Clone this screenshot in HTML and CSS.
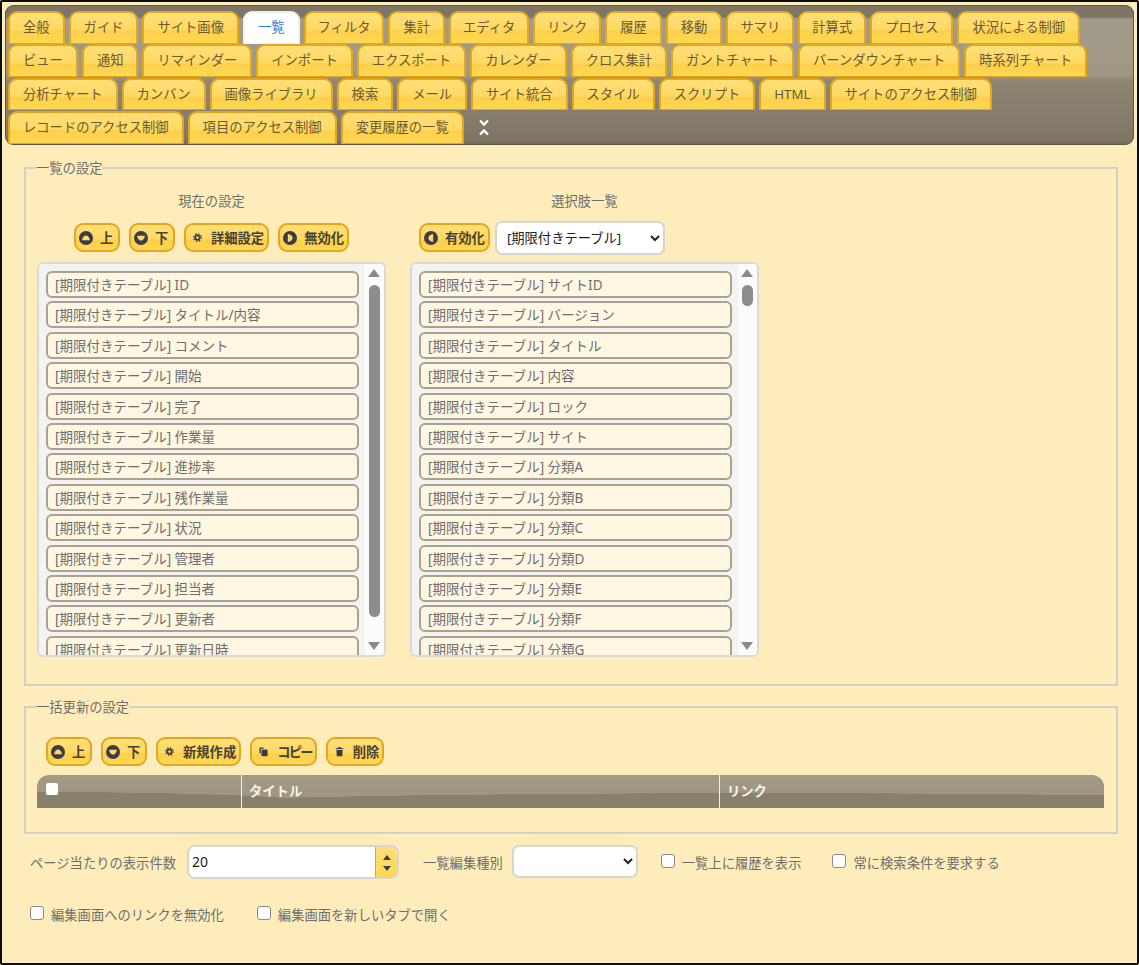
FILE: index.html
```html
<!DOCTYPE html>
<html lang="ja">
<head>
<meta charset="utf-8">
<title>一覧の設定</title>
<link rel="stylesheet" href="styles.css">
</head>
<body>
<svg class="sprite" aria-hidden="true">
  <symbol id="i-up" viewBox="0 0 16 16"><circle cx="8" cy="8" r="8" fill="#3c3c46"/><path d="M3.500 10.500C4 7 6 5 8 5s4 2 4.500 5.500z" fill="#ffd964"/></symbol>
  <symbol id="i-down" viewBox="0 0 16 16"><circle cx="8" cy="8" r="8" fill="#3c3c46"/><path d="M3.500 5.500C4 9 6 11 8 11s4-2 4.500-5.500z" fill="#ffd964"/></symbol>
  <symbol id="i-right" viewBox="0 0 16 16"><circle cx="8" cy="8" r="8" fill="#3c3c46"/><path d="M5.500 3.500C9 4 11 6 11 8s-2 4-5.500 4.500z" fill="#ffd964"/></symbol>
  <symbol id="i-left" viewBox="0 0 16 16"><circle cx="8" cy="8" r="8" fill="#3c3c46"/><path d="M10.500 3.500C7 4 5 6 5 8s2 4 5.500 4.500z" fill="#ffd964"/></symbol>
  <symbol id="i-gear" viewBox="0 0 16 16"><circle cx="8" cy="8" r="3.200" fill="none" stroke="#3c3c46" stroke-width="2.400"/><circle cx="8" cy="8" r="5.300" fill="none" stroke="#3c3c46" stroke-width="2.200" stroke-dasharray="2.100 2.060"/></symbol>
  <symbol id="i-copy" viewBox="0 0 16 16"><path d="M2 3.500A1.500 1.500 0 0 1 3.500 2H8v2H5.500A1.500 1.500 0 0 0 4 5.500V11H3.500A1.500 1.500 0 0 1 2 9.500z" fill="#3c3c46"/><rect x="5" y="5" width="9" height="10" rx="2" fill="#3c3c46"/></symbol>
  <symbol id="i-trash" viewBox="0 0 16 16"><path d="M2.500 3h11v1.600h-11z" fill="#3c3c46"/><path d="M6 1.500h4V3H6z" fill="#3c3c46"/><path d="M3.500 5.800h9L12 15H4z" fill="#3c3c46"/></symbol>
</svg>
<div class="frame">
  <nav class="tabs">
    <div class="tab-row">
      <a class="tab">全般</a><a class="tab">ガイド</a><a class="tab">サイト画像</a><a class="tab tab-on">一覧</a><a class="tab tab-tight">フィルタ</a><a class="tab">集計</a><a class="tab tab-tight">エディタ</a><a class="tab tab-tight">リンク</a><a class="tab">履歴</a><a class="tab">移動</a><a class="tab tab-tight">サマリ</a><a class="tab tab-tight">計算式</a><a class="tab">プロセス</a><a class="tab">状況による制御</a>
    </div>
    <div class="tab-row">
      <a class="tab">ビュー</a><a class="tab">通知</a><a class="tab">リマインダー</a><a class="tab">インポート</a><a class="tab">エクスポート</a><a class="tab">カレンダー</a><a class="tab">クロス集計</a><a class="tab">ガントチャート</a><a class="tab">バーンダウンチャート</a><a class="tab">時系列チャート</a>
    </div>
    <div class="tab-row">
      <a class="tab">分析チャート</a><a class="tab">カンバン</a><a class="tab">画像ライブラリ</a><a class="tab">検索</a><a class="tab">メール</a><a class="tab">サイト統合</a><a class="tab">スタイル</a><a class="tab">スクリプト</a><a class="tab">HTML</a><a class="tab">サイトのアクセス制御</a>
    </div>
    <div class="tab-row">
      <a class="tab">レコードのアクセス制御</a><a class="tab">項目のアクセス制御</a><a class="tab">変更履歴の一覧</a>
      <svg class="expand" viewBox="0 0 12 17" width="12" height="17"><path d="M2 1.500 6 5.500l4-4M2 15.500 6 11.500l4 4" fill="none" stroke="#fff" stroke-width="2.400"/></svg>
    </div>
  </nav>

  <main class="content">
    <fieldset class="group group-grid">
      <legend>一覧の設定</legend>
      <div class="columns">
        <section class="col">
          <h3 class="col-title">現在の設定</h3>
          <div class="btn-row btn-row-center">
            <button class="btn"><svg class="ic"><use href="#i-up"/></svg>上</button>
            <button class="btn"><svg class="ic"><use href="#i-down"/></svg>下</button>
            <button class="btn"><svg class="ic ic-sm"><use href="#i-gear"/></svg>詳細設定</button>
            <button class="btn"><svg class="ic"><use href="#i-right"/></svg>無効化</button>
          </div>
          <div class="listbox">
            <ul class="items">
              <li>[期限付きテーブル] ID</li>
              <li>[期限付きテーブル] タイトル/内容</li>
              <li>[期限付きテーブル] コメント</li>
              <li>[期限付きテーブル] 開始</li>
              <li>[期限付きテーブル] 完了</li>
              <li>[期限付きテーブル] 作業量</li>
              <li>[期限付きテーブル] 進捗率</li>
              <li>[期限付きテーブル] 残作業量</li>
              <li>[期限付きテーブル] 状況</li>
              <li>[期限付きテーブル] 管理者</li>
              <li>[期限付きテーブル] 担当者</li>
              <li>[期限付きテーブル] 更新者</li>
              <li>[期限付きテーブル] 更新日時</li>
            </ul>
            <div class="scroll">
              <span class="arrow-up"></span>
              <div class="track"><span class="thumb thumb-long"></span></div>
              <span class="arrow-down"></span>
            </div>
          </div>
        </section>
        <section class="col">
          <h3 class="col-title">選択肢一覧</h3>
          <div class="btn-row btn-row-left">
            <button class="btn"><svg class="ic"><use href="#i-left"/></svg>有効化</button>
            <select class="sel sel-table"><option>[期限付きテーブル]</option></select>
          </div>
          <div class="listbox">
            <ul class="items">
              <li>[期限付きテーブル] サイトID</li>
              <li>[期限付きテーブル] バージョン</li>
              <li>[期限付きテーブル] タイトル</li>
              <li>[期限付きテーブル] 内容</li>
              <li>[期限付きテーブル] ロック</li>
              <li>[期限付きテーブル] サイト</li>
              <li>[期限付きテーブル] 分類A</li>
              <li>[期限付きテーブル] 分類B</li>
              <li>[期限付きテーブル] 分類C</li>
              <li>[期限付きテーブル] 分類D</li>
              <li>[期限付きテーブル] 分類E</li>
              <li>[期限付きテーブル] 分類F</li>
              <li>[期限付きテーブル] 分類G</li>
            </ul>
            <div class="scroll">
              <span class="arrow-up"></span>
              <div class="track"><span class="thumb thumb-short"></span></div>
              <span class="arrow-down"></span>
            </div>
          </div>
        </section>
      </div>
    </fieldset>

    <fieldset class="group group-bulk">
      <legend>一括更新の設定</legend>
      <div class="btn-row btn-row-bulk">
        <button class="btn"><svg class="ic"><use href="#i-up"/></svg>上</button>
        <button class="btn"><svg class="ic"><use href="#i-down"/></svg>下</button>
        <button class="btn"><svg class="ic ic-sm"><use href="#i-gear"/></svg>新規作成</button>
        <button class="btn btn-narrow"><svg class="ic ic-sm"><use href="#i-copy"/></svg>コピー</button>
        <button class="btn"><svg class="ic ic-sm"><use href="#i-trash"/></svg>削除</button>
      </div>
      <div class="thead">
        <div class="th th-check"><input class="th-box" type="checkbox"></div>
        <div class="th th-title">タイトル</div>
        <div class="th th-link">リンク</div>
      </div>
    </fieldset>

    <div class="opts opts-1">
      <label class="opt-label">ページ当たりの表示件数</label>
      <div class="spin">
        <input class="spin-input" type="text" value="20">
        <div class="spin-btns"><span class="spin-up"></span><span class="spin-down"></span></div>
      </div>
      <label class="opt-label opt-kind">一覧編集種別</label>
      <select class="sel sel-kind"><option></option></select>
      <label class="check check-a"><input type="checkbox">一覧上に履歴を表示</label>
      <label class="check check-b"><input type="checkbox">常に検索条件を要求する</label>
    </div>
    <div class="opts opts-2">
      <label class="check"><input type="checkbox">編集画面へのリンクを無効化</label>
      <label class="check check-c"><input type="checkbox">編集画面を新しいタブで開く</label>
    </div>
  </main>
</div>
</body>
</html>
```

FILE: styles.css
```css
* { box-sizing: border-box; }
html, body { margin: 0; padding: 0; }
body {
  width: 1139px;
  height: 965px;
  overflow: hidden;
  font-family: "Noto Sans", "Noto Sans CJK JP", sans-serif;
  font-size: 13.3px;
  color: #6e6e6e;
  background: #feedbb;
}
.sprite { display: none; }

.frame {
  height: 965px;
  border: 2px solid #0c0c0c;
  border-radius: 2px;
  padding: 3px 3px 0;
  background: #feedbb;
}

.tabs {
  height: 140px;
  padding: 6px 3px 0;
  border-radius: 9px;
  box-shadow: inset 0 0 0 1px #5f5849;
  background:
    linear-gradient(to bottom, #7d7566 0, #7d7566 12px, #a39b89 14px, #a09885 70px, #8e8573 76px, #7f7666 135px, #6f6757 140px);
}
.tab-row {
  display: flex;
  align-items: flex-start;
  gap: 4px;
  height: 33.4px;
}
.tab {
  display: block;
  height: 32.5px;
  padding: 0 13px;
  line-height: 29px;
  white-space: nowrap;
  color: #6b5a32;
  border: 2px solid #e3a71f;
  border-bottom-width: 1px;
  border-radius: 9px 9px 0 0;
  background: linear-gradient(to bottom, #ffdf78 0, #ffd964 55%, #fdd04c 60%, #ffd752 100%);
}
.tab-tight { padding: 0 12px; }
.tab-on {
  color: #2a80cf;
  background: #fff;
  border-color: #f1f1ee;
}
.expand { margin: 8px 0 0 10px; }

.content { padding: 0 16px 0 19px; }

.group {
  margin: 0;
  padding: 0 11px;
  border: 2px solid #cfd0cb;
  min-width: 0;
}
.group legend {
  padding: 0;
  margin-left: -1px;
  line-height: 18px;
  color: #6e6e6e;
}
.group-grid { height: 527px; margin-top: 14px; }
.group-bulk { height: 136px; margin-top: 12px; }

.columns { display: flex; gap: 24px; }
.col { width: 349px; }
.col-title {
  margin: 14px 0 0;
  font-size: 13.3px;
  font-weight: 400;
  line-height: 20px;
  text-align: center;
  color: #6e6e6e;
}

.btn-row { display: flex; align-items: center; gap: 9px; }
.btn-row-center { justify-content: center; margin-top: 11px; height: 31px; }
.btn-row-left { padding-left: 9px; margin-top: 11px; height: 31px; gap: 5px; }
.btn-row-bulk { margin: 21px 0 9px 9px; height: 29px; }

.btn {
  display: inline-flex;
  align-items: center;
  gap: 7px;
  height: 29px;
  min-width: 46px;
  padding: 0 3px 0 3px;
  border: 2px solid #e3a71f;
  border-radius: 9px;
  font: inherit;
  font-weight: 700;
  color: #4a4230;
  background: linear-gradient(to bottom, #ffdf78 0, #ffd964 55%, #fdd04c 60%, #ffd752 100%);
}
.btn-narrow { letter-spacing: -1.8px; }
.ic { width: 14px; height: 14px; flex: none; }
.ic-sm { width: 11px; height: 11px; margin: 0 1px 0 3px; }

.sel {
  font: inherit;
  color: #222;
  background-color: #fff;
  border: 2px solid #d6d6d0;
  border-radius: 7px;
}
.sel-table { width: 170px; height: 34px; padding-left: 6px; }
.sel-kind { width: 126px; height: 33px; }

.listbox {
  display: flex;
  height: 395px;
  margin-top: 9px;
  border: 2px solid #d9d9d6;
  border-radius: 6px;
  background: #f3f3f3;
  overflow: hidden;
}
.items {
  flex: 1;
  list-style: none;
  margin: 0;
  padding: 7px 0 0 7px;
  overflow: hidden;
}
.items li {
  width: 313px;
  height: 27px;
  margin-bottom: 3.4px;
  padding-left: 7px;
  font-size: 13.5px;
  line-height: 25px;
  white-space: nowrap;
  color: #6e6e6e;
  border: 2px solid #aba28d;
  border-radius: 6px;
  background: #fff7e2;
}
.scroll {
  flex: none;
  width: 19px;
  display: flex;
  flex-direction: column;
  align-items: center;
  padding: 5px 1px 5px 0;
  background: #fbfbfb;
}
.arrow-up, .arrow-down {
  width: 0; height: 0;
  border-left: 6px solid transparent;
  border-right: 6px solid transparent;
  flex: none;
}
.arrow-up { border-bottom: 8px solid #8a8a8a; }
.arrow-down { border-top: 8px solid #8a8a8a; }
.track { flex: 1; padding-top: 8px; }
.thumb { display: block; width: 11px; border-radius: 6px; background: #8c8c8c; }
.thumb-long { height: 332px; }
.thumb-short { height: 21px; }

.thead {
  display: flex;
  width: 1067px;
  height: 33px;
  border-radius: 12px 12px 0 0;
  overflow: hidden;
  background:
    radial-gradient(ellipse 62% 15px at 68% 100%, #897f6d 0, #897f6d 98%, transparent 100%),
    radial-gradient(ellipse 28% 16px at 2% 100%, #897f6d 0, #897f6d 98%, transparent 100%),
    linear-gradient(to bottom, #a29a87, #9c9380);
}
.th {
  font-weight: 700;
  color: #f7f3e8;
  line-height: 33px;
  padding-left: 7px;
  border-right: 1px solid #f5f0df;
}
.th-check { width: 205px; padding-left: 9px; line-height: 0; }
.th-title { width: 478px; }
.th-link { flex: 1; border-right: 0; }
.th-box {
  width: 12px; height: 12px;
  margin: 8px 0 0;
  appearance: none;
  background: #fff;
  border-radius: 2px;
}

.opts { display: flex; align-items: center; }
.opts-1 { margin: 10px 0 0 6px; height: 35px; }
.opts-2 { margin: 17px 0 0 6px; height: 35px; }
.opt-label { white-space: nowrap; padding-top: 2px; }
.opt-kind { margin-left: 24px; margin-right: 9px; }

.spin {
  display: flex;
  width: 212px;
  height: 34px;
  margin-left: 11px;
  border: 2px solid #d6d6d0;
  border-radius: 8px;
  overflow: hidden;
  background: #fff;
}
.spin-input {
  flex: 1;
  min-width: 0;
  border: 0;
  outline: 0;
  padding: 0 0 0 3px;
  font: inherit;
  font-size: 14px;
  color: #222;
}
.spin-btns {
  width: 22px;
  display: flex;
  flex-direction: column;
  align-items: center;
  justify-content: space-around;
  padding: 5px 0 3px;
  border-left: 1px solid #e3a71f;
  background: linear-gradient(to bottom, #ffdf78, #ffd752);
}
.spin-up, .spin-down {
  width: 0; height: 0;
  border-left: 4px solid transparent;
  border-right: 4px solid transparent;
}
.spin-up { border-bottom: 5px solid #3c3c46; }
.spin-down { border-top: 5px solid #3c3c46; }

.check { display: flex; align-items: center; white-space: nowrap; padding-top: 2px; }
.check input {
  width: 14px; height: 14px;
  margin: -3px 7px 0 0;
  appearance: none;
  border: 1.500px solid #8a8a8a;
  border-radius: 3px;
  background: #fff;
  flex: none;
}
.check-a { margin-left: 23px; }
.check-b { margin-left: 31px; }
.check-c { margin-left: 33px; }
```
